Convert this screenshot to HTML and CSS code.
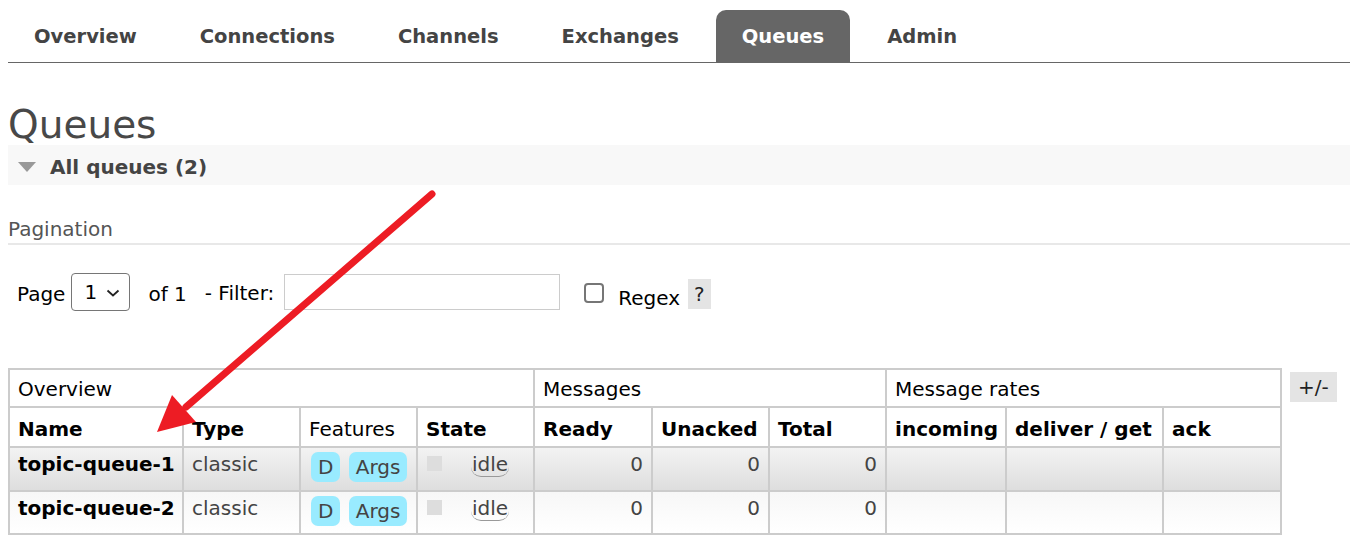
FILE: index.html
```html
<!DOCTYPE html>
<html lang="en">
<head>
    <meta charset="UTF-8">
    <title>RabbitMQ Management - Queues</title>
    <link rel="stylesheet" href="styles.css">
</head>
<body>
    <ul class="tabs">
        <li><a href="#">Overview</a></li>
        <li><a href="#">Connections</a></li>
        <li><a href="#">Channels</a></li>
        <li><a href="#">Exchanges</a></li>
        <li><a href="#" class="active">Queues</a></li>
        <li><a href="#">Admin</a></li>
    </ul>

    <h1>Queues</h1>
    <h2 class="section-head"><span class="toggle"></span>All queues (2)</h2>

    <div class="pagination-title">Pagination</div>
    <div class="pager">
        <span class="pager-text">Page</span>
        <span class="select-wrap">
            <select class="page-select"><option>1</option></select>
            <svg class="chevron" width="14" height="8" viewBox="0 0 14 8"><path d="M1.5 1.5 L7 6.5 L12.5 1.5" fill="none" stroke="#222" stroke-width="1.8"/></svg>
        </span>
        <span class="pager-text of">of 1</span>
        <span class="pager-text filter">- Filter:</span>
        <input type="text" class="filter-input">
        <input type="checkbox" class="regex-box">
        <span class="pager-text regex">Regex</span>
        <span class="help">?</span>
    </div>

    <div class="list-wrap">
        <table class="list">
            <colgroup>
                <col class="w-name"><col class="w-type"><col class="w-feat"><col class="w-state">
                <col class="w-ready"><col class="w-unacked"><col class="w-total">
                <col class="w-in"><col class="w-deliver"><col class="w-ack">
            </colgroup>
            <thead>
                <tr class="group-row">
                    <th colspan="4">Overview</th>
                    <th colspan="3">Messages</th>
                    <th colspan="3">Message rates</th>
                </tr>
                <tr class="head-row">
                    <th class="b">Name</th>
                    <th class="b">Type</th>
                    <th>Features</th>
                    <th class="b">State</th>
                    <th class="b">Ready</th>
                    <th class="b">Unacked</th>
                    <th class="b">Total</th>
                    <th class="b">incoming</th>
                    <th class="b">deliver / get</th>
                    <th class="b">ack</th>
                </tr>
            </thead>
            <tbody>
                <tr class="alt1">
                    <td class="qname">topic-queue-1</td>
                    <td>classic</td>
                    <td class="features"><span class="badge">D</span> <span class="badge">Args</span></td>
                    <td class="state"><span class="dot"></span><span class="idle">idle</span></td>
                    <td class="num">0</td>
                    <td class="num">0</td>
                    <td class="num">0</td>
                    <td></td><td></td><td></td>
                </tr>
                <tr class="alt2">
                    <td class="qname">topic-queue-2</td>
                    <td>classic</td>
                    <td class="features"><span class="badge">D</span> <span class="badge">Args</span></td>
                    <td class="state"><span class="dot"></span><span class="idle">idle</span></td>
                    <td class="num">0</td>
                    <td class="num">0</td>
                    <td class="num">0</td>
                    <td></td><td></td><td></td>
                </tr>
            </tbody>
        </table>
        <span class="toggle-cols">+/-</span>
    </div>

    <svg class="arrow" width="1350" height="543" viewBox="0 0 1350 543">
        <line x1="432" y1="194" x2="186" y2="407" stroke="#ed1c24" stroke-width="7" stroke-linecap="round"/>
        <polygon points="157,432 172,395 196,422" fill="#ed1c24"/>
    </svg>
</body>
</html>
```

FILE: styles.css
```css
body {
    margin: 0 0 0 8px;
    font-family: "DejaVu Sans", Verdana, sans-serif;
    font-size: 20px;
    color: #444;
}
.tabs {
    list-style: none;
    margin: 0;
    padding: 10px 0 0;
    display: flex;
    gap: 11px;
    border-bottom: 1px solid #666;
}
.tabs a {
    display: block;
    padding: 2px 26px 0;
    line-height: 50px;
    font-size: 19.5px;
    font-weight: bold;
    color: #444;
    text-decoration: none;
    border-radius: 10px 10px 0 0;
}
.tabs a.active {
    background: #666;
    color: #fff;
}
h1 {
    margin: 42px 0 0;
    font-size: 39px;
    font-weight: normal;
    line-height: 40px;
    color: #484848;
}
.section-head {
    box-sizing: border-box;
    margin: 0;
    height: 40px;
    padding: 4px 0 0 10px;
    display: flex;
    align-items: center;
    gap: 14px;
    background: #f8f8f8;
    font-size: 20px;
    color: #444;
}
.toggle {
    width: 0;
    height: 0;
    border-left: 9px solid transparent;
    border-right: 9px solid transparent;
    border-top: 10px solid #999;
}
.pagination-title {
    margin-top: 32px;
    line-height: 24px;
    padding-bottom: 2px;
    border-bottom: 2px solid #e8e8e8;
    color: #555;
}
.pager {
    display: flex;
    align-items: flex-start;
    height: 38px;
    margin-top: 28px;
    padding-left: 9px;
    color: #000;
}
.pager-text {
    line-height: 24px;
    margin-top: 9px;
}
.select-wrap {
    position: relative;
    margin-left: 6px;
}
.page-select {
    appearance: none;
    width: 59px;
    height: 38px;
    padding: 0 0 0 12px;
    border: 1px solid #767676;
    border-radius: 4px;
    background: #fff;
    font-family: inherit;
    font-size: 20px;
    color: #000;
}
.chevron {
    position: absolute;
    left: 35px;
    top: 16px;
}
.of {
    margin-left: 18px;
}
.filter {
    margin-left: 18px;
    margin-top: 8px;
}
.filter-input {
    width: 276px;
    height: 36px;
    box-sizing: border-box;
    margin: 1px 0 0 10px;
    border: 1px solid #ccc;
}
.regex-box {
    appearance: none;
    width: 20px;
    height: 20px;
    margin: 10px 0 0 24px;
    border: 2px solid #767676;
    border-radius: 4px;
    background: #fff;
}
.regex {
    margin-left: 14px;
    margin-top: 13px;
}
.help {
    margin: 6px 0 0 8px;
    padding: 0 6px;
    line-height: 30px;
    background: #e4e4e4;
    color: #222;
}
.list-wrap {
    display: flex;
    align-items: flex-start;
    gap: 8px;
    margin-top: 57px;
}
.list {
    border-collapse: collapse;
    table-layout: fixed;
    width: 1272px;
}
.w-name { width: 174px; }
.w-type, .w-feat, .w-state, .w-unacked, .w-total { width: 117px; }
.w-ready, .w-ack { width: 118px; }
.w-in { width: 120px; }
.w-deliver { width: 157px; }
.list th, .list td {
    border: 2px solid #ccc;
    padding: 4px 7px 0 8px;
    text-align: left;
    vertical-align: top;
    line-height: 24px;
    white-space: nowrap;
}
.list th {
    font-weight: normal;
    color: #000;
    background: #fff;
}
.list th.b {
    font-weight: bold;
}
.group-row th {
    height: 29px;
    padding-top: 7px;
}
.head-row th {
    height: 29px;
    padding-top: 9px;
}
.alt1 td {
    height: 38px;
    background: linear-gradient(#f3f3f3, #dedede);
}
.alt2 td {
    height: 37px;
    background: linear-gradient(#f7f7f7, #fff);
}
.qname {
    font-weight: bold;
    color: #000;
}
.num {
    text-align: right !important;
    padding-right: 8px !important;
}
.features {
    padding-left: 10px !important;
}
.badge {
    display: inline-block;
    padding: 3px 7px;
    border-radius: 7px;
    background: #99ebff;
    color: #444;
}
.badge + .badge {
    margin-left: 2px;
}
.state {
    padding-left: 9px !important;
}
.dot {
    display: inline-block;
    width: 15px;
    height: 15px;
    margin: 4px 29px 0 0;
    vertical-align: top;
    background: #ddd;
}
.idle {
    display: inline-block;
    padding: 0 1px;
    line-height: 24px;
    border-bottom: 1px solid #999;
    border-radius: 10px;
}
.toggle-cols {
    margin-top: 4px;
    padding: 0 8px;
    line-height: 30px;
    background: #e4e4e4;
    color: #222;
}
.arrow {
    position: absolute;
    left: 0;
    top: 0;
    pointer-events: none;
}
```
